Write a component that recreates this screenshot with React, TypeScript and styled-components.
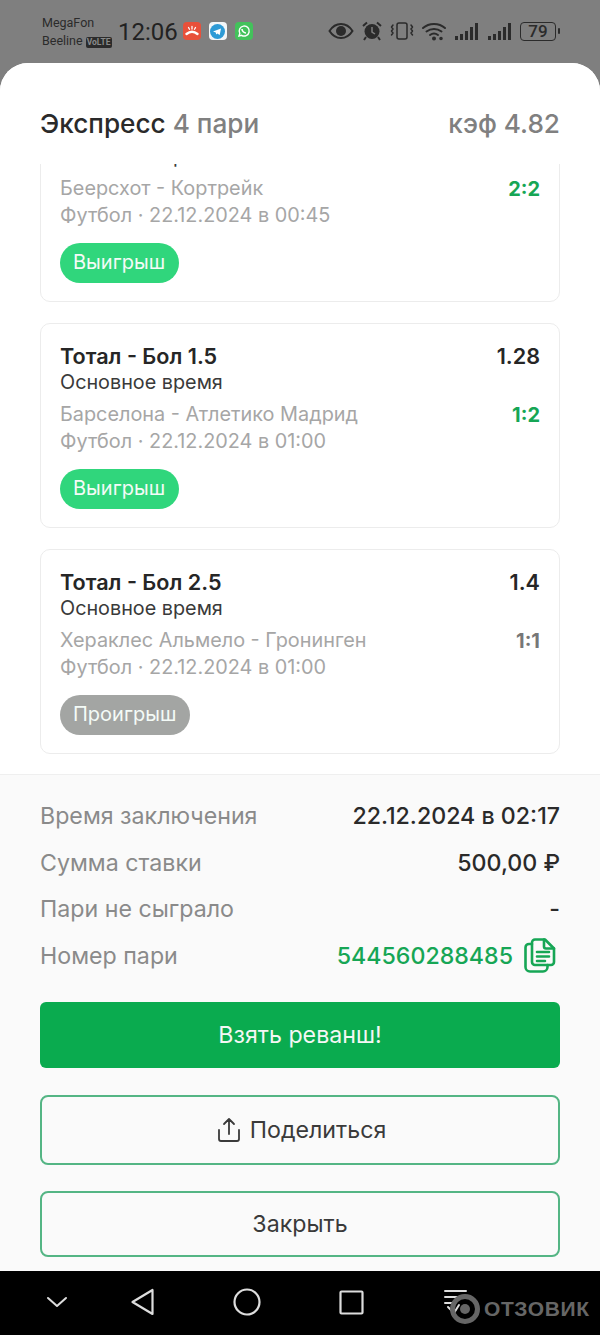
import React from "react";
import styled, { createGlobalStyle } from "styled-components";

const Global = createGlobalStyle`
  html, body { margin: 0; padding: 0; background: #7f7f7f; }
  * { box-sizing: border-box; }
  body { font-family: Inter, "Liberation Sans", sans-serif; }
`;

const Page = styled.div`
  width: 600px;
  height: 1335px;
  display: flex;
  flex-direction: column;
  overflow: hidden;
  background: #7f7f7f;
`;

const StatusBar = styled.div`
  height: 63px;
  flex: none;
  display: flex;
  align-items: center;
  padding: 0 41px 0 42px;
  color: #222;
`;

const Carriers = styled.div`
  width: 76px;
  font-family: Roboto, sans-serif;
  font-size: 12.5px;
  line-height: 18px;
  color: #2b2b2b;
  margin-top: 1px;
  white-space: nowrap;
`;

const Volte = styled.span`
  display: inline-block;
  background: #2b2b2b;
  color: #8a8a8a;
  font-size: 8.5px;
  line-height: 11px;
  font-weight: 700;
  padding: 0 1px;
  margin-left: 3px;
  border-radius: 2px;
  vertical-align: 0;
`;

const Clock = styled.div`
  font-family: Roboto, sans-serif;
  font-size: 24px;
  color: #222;
  margin-right: 5px;
  margin-top: 1px;
`;

const AppIcon = styled.div<{ $bg: string }>`
  width: 18px;
  height: 18px;
  border-radius: 4px;
  background: ${p => p.$bg};
  margin-right: 8px;
  display: flex;
  align-items: center;
  justify-content: center;
  margin-top: -1px;
`;

const StatusRight = styled.div`
  margin-left: auto;
  display: flex;
  align-items: center;
  gap: 7px;
  margin-top: -1px;
`;

const Battery = styled.div`
  width: 36px;
  height: 19px;
  border: 1.5px solid #2b2b2b;
  border-radius: 4px;
  font-family: Roboto, sans-serif;
  font-size: 17px;
  font-weight: 500;
  line-height: 16px;
  text-align: center;
  color: #2b2b2b;
  position: relative;
  margin-right: 3px;
  &::after {
    content: "";
    position: absolute;
    right: -5px;
    top: 5px;
    width: 2px;
    height: 6px;
    background: #2b2b2b;
    border-radius: 1px;
  }
`;

const Sheet = styled.div`
  flex: 1;
  min-height: 0;
  display: flex;
  flex-direction: column;
  background: #fff;
  border-radius: 28px 28px 0 0;
  overflow: hidden;
`;

const Header = styled.div`
  height: 101px;
  flex: none;
  display: flex;
  align-items: center;
  justify-content: space-between;
  padding: 20px 40px 0;
  font-size: 26.2px;
  font-weight: 500;
  color: #2a2a2a;
  background: #fff;
  position: relative;
  z-index: 1;
`;

const Muted = styled.span`
  color: #808080;
`;

const List = styled.div`
  flex: 1;
  min-height: 0;
  overflow: hidden;
  padding: 0 40px;
`;

const ListInner = styled.div`
  display: flex;
  flex-direction: column;
  gap: 21px;
  margin-top: -67px;
`;

const Card = styled.div`
  height: 205px;
  flex: none;
  border: 1px solid #ececec;
  border-radius: 10px;
  padding: 18px 19px 0;
`;

const Row = styled.div`
  display: flex;
  justify-content: space-between;
  align-items: center;
`;

const MatchRow = styled(Row)`
  margin-top: 7px;
`;

const Title = styled.div`
  font-size: 21.6px;
  line-height: 28px;
  font-weight: 600;
  color: #262626;
`;

const Sub = styled.div`
  font-size: 19.8px;
  line-height: 23px;
  margin-top: 1px;
  color: #3a3a3a;
`;

const Teams = styled.div`
  font-size: 19.85px;
  line-height: 27px;
  color: #a6a6a6;
`;

const Score = styled.div<{ $win: boolean }>`
  font-size: 20px;
  font-weight: 700;
  color: ${p => (p.$win ? "#16a655" : "#777")};
`;

const Badge = styled.div<{ $win: boolean }>`
  display: inline-block;
  height: 40px;
  line-height: 39px;
  padding: 0 14px 0 13px;
  margin-top: 14px;
  border-radius: 20px;
  font-size: 20px;
  color: #f4fbf7;
  background: ${p => (p.$win ? "#30d67c" : "#a3a5a3")};
`;

const Footer = styled.div`
  flex: none;
  height: 497px;
  background: #fafafa;
  border-top: 1px solid #efefef;
  padding: 18px 40px 0;
`;

const Info = styled.div`
  height: 46.5px;
  display: flex;
  align-items: center;
  justify-content: space-between;
  font-size: 23.2px;
  color: #8a8a8a;
`;

const InfoValue = styled.div<{ $green?: boolean }>`
  display: flex;
  align-items: center;
  gap: 11px;
  font-weight: 500;
  color: ${p => (p.$green ? "#16a655" : "#2a2a2a")};
`;

const CopyIcon = styled.svg`
  margin-right: 4px;
  margin-top: -1px;
`;

const Primary = styled.div`
  margin-top: 23px;
  height: 66px;
  border-radius: 6px;
  background: #0aab4f;
  color: #f4f7f4;
  font-size: 23.2px;
  display: flex;
  align-items: center;
  justify-content: center;
`;

const Outline = styled.div<{ $h: number; $mt: number; $shift?: number }>`
  margin-top: ${p => p.$mt}px;
  height: ${p => p.$h}px;
  padding-left: ${p => p.$shift || 0}px;
  border: 2px solid #54b584;
  border-radius: 8px;
  color: #3a3a3a;
  font-size: 23.2px;
  display: flex;
  align-items: center;
  justify-content: center;
  gap: 9px;
`;

const NavBar = styled.div`
  height: 64px;
  flex: none;
  background: #000;
  display: flex;
  align-items: center;
  position: relative;
`;

const NavSlot = styled.div<{ $x: number }>`
  position: absolute;
  left: ${p => p.$x}px;
  top: 15px;
  height: 32px;
  display: flex;
  align-items: center;
`;

const Watermark = styled.div`
  position: absolute;
  left: 449px;
  top: 22px;
  display: flex;
  align-items: center;
  gap: 3px;
  color: #666;
  font-family: "Liberation Sans", sans-serif;
  font-size: 21px;
  letter-spacing: 0.6px;
  font-weight: 700;
`;

const Stroke: React.FC<React.SVGProps<SVGSVGElement>> = props => (
  <svg fill="none" stroke="currentColor" strokeLinecap="round" strokeLinejoin="round" {...props} />
);

type Bet = {
  title: string;
  coef: string;
  teams: string;
  date: string;
  score: string;
  win: boolean;
};

const bets: Bet[] = [
  { title: "Тотал - Бол 1.5", coef: "1.5", teams: "Беерсхот - Кортрейк", date: "Футбол · 22.12.2024 в 00:45", score: "2:2", win: true },
  { title: "Тотал - Бол 1.5", coef: "1.28", teams: "Барселона - Атлетико Мадрид", date: "Футбол · 22.12.2024 в 01:00", score: "1:2", win: true },
  { title: "Тотал - Бол 2.5", coef: "1.4", teams: "Хераклес Альмело - Гронинген", date: "Футбол · 22.12.2024 в 01:00", score: "1:1", win: false },
];

const Signal = () => (
  <svg width="26" height="20" viewBox="0 0 26 20" fill="#2b2b2b">
    <rect x="1" y="15" width="3" height="4" />
    <rect x="6" y="13" width="3" height="6" />
    <rect x="11" y="10" width="3" height="9" />
    <rect x="16" y="6" width="3" height="13" />
    <rect x="21" y="2" width="3" height="17" />
  </svg>
);

export default function App() {
  return (
    <Page>
      <Global />
      <StatusBar>
        <Carriers>
          MegaFon
          <br />
          Beeline<Volte>VoLTE</Volte>
        </Carriers>
        <Clock>12:06</Clock>
        <AppIcon $bg="#e8503a">
          <svg width="16" height="16" viewBox="0 0 16 16" fill="none" stroke="#fff" strokeLinecap="round">
            <path d="M2.500 11c3.500-3 7.500-3 11 0" strokeWidth="2.400" />
            <path d="M8 3.500v2.500M4.500 4.500l1 1.800M11.500 4.500l-1 1.800" strokeWidth="1.300" />
          </svg>
        </AppIcon>
        <AppIcon $bg="#f2f6f8">
          <svg width="15" height="15" viewBox="0 0 15 15">
            <circle cx="7.5" cy="7.5" r="7.5" fill="#2e9bd6" />
            <path d="M3 7.5l8-3-1.3 6.6-2.4-1.7-1.2 1.2-.3-2.2z" fill="#fff" />
          </svg>
        </AppIcon>
        <AppIcon $bg="#43c25b">
          <svg width="14" height="14" viewBox="0 0 14 14" fill="none" stroke="#fff" strokeWidth="1.4">
            <path d="M2 12l.8-2.6A5 5 0 1 1 4.6 11.300z" />
            <path d="M5 5c0 2 2 4 4 4" strokeWidth="1.6" />
          </svg>
        </AppIcon>
        <StatusRight>
          <svg width="26" height="20" viewBox="0 0 26 20" fill="none">
            <path d="M1.500 10C5 4.500 9 3 13 3s8 1.500 11.500 7C21 15.500 17 17 13 17s-8-1.500-11.500-7z" stroke="#2b2b2b" strokeWidth="2" />
            <circle cx="13" cy="10" r="5" fill="#2b2b2b" />
          </svg>
          <svg width="22" height="20" viewBox="0 0 22 20" fill="#2b2b2b">
            <circle cx="11" cy="10.500" r="7.500" />
            <path d="M2 5l4-3.500M20 5l-4-3.500M5 16l-2 3M17 16l2 3" stroke="#2b2b2b" strokeWidth="2" />
            <path d="M11 6v5l3 2" stroke="#7f7f7f" strokeWidth="1.500" fill="none" />
          </svg>
          <Stroke width="24" height="20" viewBox="0 0 24 20" color="#2b2b2b" strokeWidth="1.500">
            <rect x="7" y="2" width="10" height="16" rx="2" />
            <path d="M3 4l-1.500 2 1.500 2-1.500 2 1.500 2-1.500 2M21 4l1.500 2-1.500 2 1.500 2-1.500 2 1.500 2" />
          </Stroke>
          <Stroke width="26" height="20" viewBox="0 0 26 20" color="#2b2b2b" strokeWidth="2">
            <path d="M2 7c6-5.500 16-5.500 22 0M5.500 10.500c4.500-3.500 10.500-3.500 15 0M9 14c2.500-1.800 5.500-1.800 8 0" />
            <circle cx="13" cy="17.500" r="1" fill="#2b2b2b" />
            <circle cx="20" cy="17.500" r=".8" fill="#2b2b2b" />
          </Stroke>
          <Signal />
          <Signal />
          <Battery>79</Battery>
        </StatusRight>
      </StatusBar>

      <Sheet>
        <Header>
          <div>
            Экспресс <Muted>4 пари</Muted>
          </div>
          <Muted>кэф 4.82</Muted>
        </Header>

        <List>
          <ListInner>
            {bets.map(b => (
              <Card key={b.teams}>
                <Row>
                  <Title>{b.title}</Title>
                  <Title>{b.coef}</Title>
                </Row>
                <Sub>Основное время</Sub>
                <MatchRow>
                  <Teams>{b.teams}</Teams>
                  <Score $win={b.win}>{b.score}</Score>
                </MatchRow>
                <Teams>{b.date}</Teams>
                <Badge $win={b.win}>{b.win ? "Выигрыш" : "Проигрыш"}</Badge>
              </Card>
            ))}
          </ListInner>
        </List>

        <Footer>
          <Info>
            <span>Время заключения</span>
            <InfoValue>22.12.2024 в 02:17</InfoValue>
          </Info>
          <Info>
            <span>Сумма ставки</span>
            <InfoValue>500,00 ₽</InfoValue>
          </Info>
          <Info>
            <span>Пари не сыграло</span>
            <InfoValue>-</InfoValue>
          </Info>
          <Info>
            <span>Номер пари</span>
            <InfoValue $green>
              544560288485
              <CopyIcon width="32" height="35" viewBox="0 0 32 35" fill="none" stroke="currentColor" strokeWidth="2.600" strokeLinecap="round" strokeLinejoin="round">
                <path d="M11 1.500h10l9 9V24a3 3 0 0 1-3 3H11a3 3 0 0 1-3-3V4.500a3 3 0 0 1 3-3z" />
                <path d="M20 1.500v7a2 2 0 0 0 2 2h8M13 14h12M13 18.500h12M13 23h8" />
                <path d="M8 6H5a3.500 3.500 0 0 0-3.500 3.500V29a4.500 4.500 0 0 0 4.500 4.500h13a4.500 4.500 0 0 0 4.500-4.500v-2" />
              </CopyIcon>
            </InfoValue>
          </Info>
          <Primary>Взять реванш!</Primary>
          <Outline $h={70} $mt={27} $shift={3}>
            <Stroke width="24" height="26" viewBox="0 0 24 26" strokeWidth="1.800">
              <path d="M12 17V2M7 7l5-5 5 5M2 13v9a2 2 0 0 0 2 2h16a2 2 0 0 0 2-2v-9" />
            </Stroke>
            Поделиться
          </Outline>
          <Outline $h={66} $mt={26}>
            Закрыть
          </Outline>
        </Footer>
      </Sheet>

      <NavBar>
        <NavSlot $x={46}>
          <Stroke width="22" height="14" viewBox="0 0 22 14" color="#ddd" strokeWidth="2">
            <path d="M2 3l9 8 9-8" />
          </Stroke>
        </NavSlot>
        <NavSlot $x={130}>
          <Stroke width="26" height="30" viewBox="0 0 26 30" color="#ddd" strokeWidth="2.200">
            <path d="M22.500 3v24L2.500 15z" />
          </Stroke>
        </NavSlot>
        <NavSlot $x={233}>
          <svg width="28" height="28" viewBox="0 0 28 28" fill="none" stroke="#ddd" strokeWidth="2.200">
            <circle cx="14" cy="14" r="12.500" />
          </svg>
        </NavSlot>
        <NavSlot $x={339}>
          <svg width="25" height="25" viewBox="0 0 25 25" fill="none" stroke="#ddd" strokeWidth="2.200">
            <rect x="1.500" y="1.500" width="22" height="22" rx="1" />
          </svg>
        </NavSlot>
        <NavSlot $x={444}>
          <Stroke width="24" height="30" viewBox="0 0 24 30" color="#ddd" strokeWidth="2">
            <path d="M1 4h21M1 10h21M1 16h10M4 20l6 6 5-8" />
          </Stroke>
        </NavSlot>
        <Watermark>
          <svg width="32" height="32" viewBox="0 0 32 32" fill="none">
            <circle cx="16" cy="16" r="12.500" stroke="#666" strokeWidth="5" />
            <circle cx="16" cy="16" r="5" fill="#666" />
          </svg>
          ОТЗОВИК
        </Watermark>
      </NavBar>
    </Page>
  );
}
